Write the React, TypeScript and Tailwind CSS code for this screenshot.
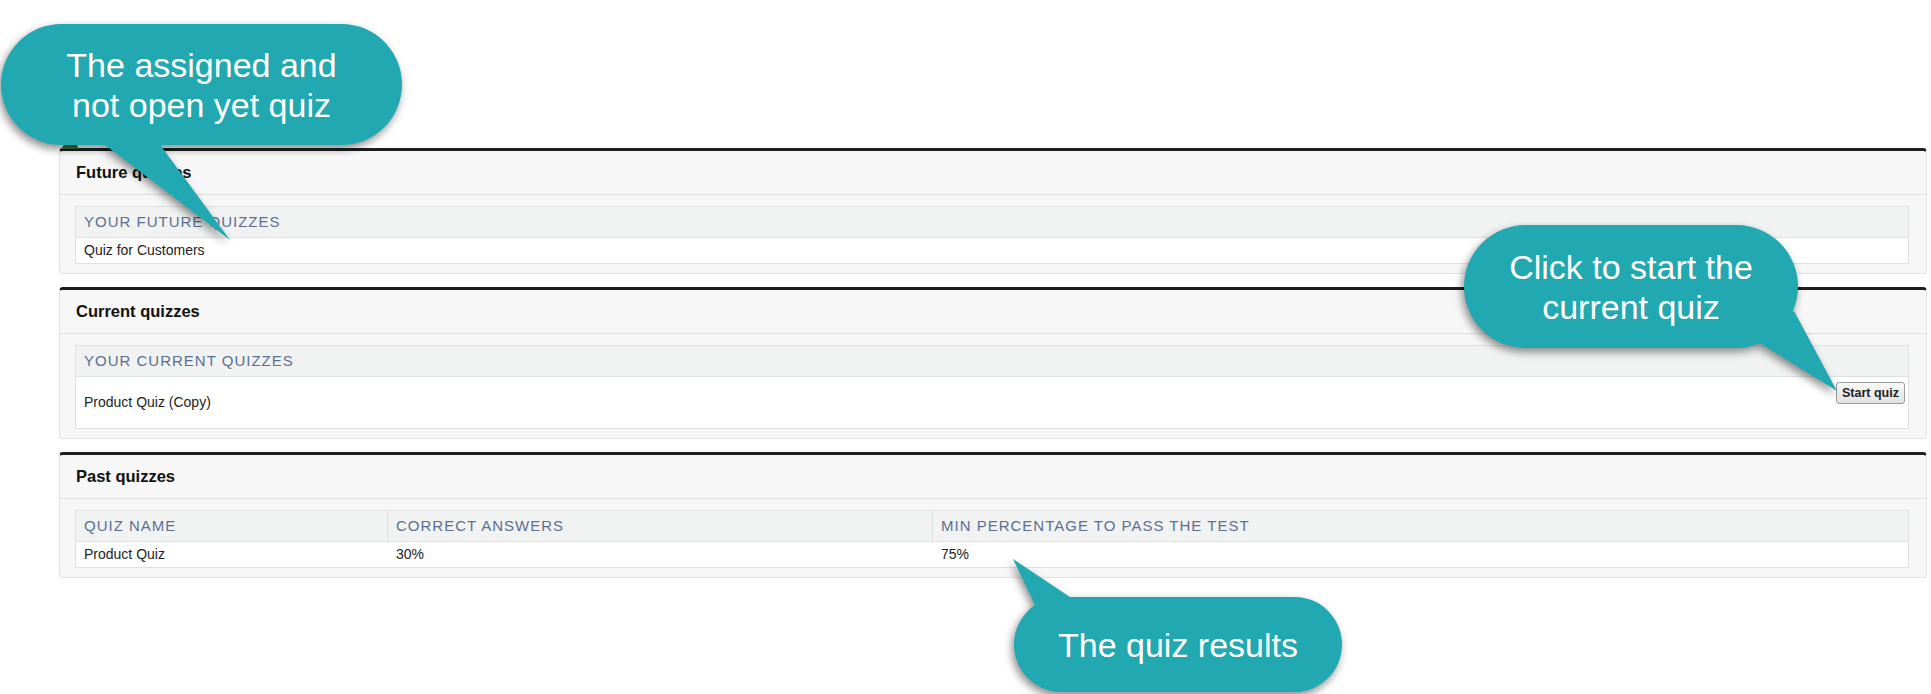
import React from "react";

const font = "font-['Liberation_Sans',Arial,sans-serif]";

function Panel({ title, children }: { title: string; children: React.ReactNode }) {
  return (
    <div className="rounded-[4px] border border-[#e2e2e2] border-t-[3px] border-t-[#1e1e1e] bg-[#f7f7f7]">
      <div className="h-[44px] flex items-center px-[16px] border-b border-[#dedede] text-[16.5px] font-bold text-[#111]">
        {title}
      </div>
      <div className="pt-[11px] pb-[9px] pl-[15px] pr-[17px]">{children}</div>
    </div>
  );
}

const th =
  "h-[31px] flex items-center px-[8px] text-[15px] tracking-[1px] uppercase text-[#5b6f92]";
const thCell =
  "h-[30px] flex items-center px-[8px] text-[15px] tracking-[1px] uppercase text-[#5b6f92]";

function Bubble({
  left,
  top,
  width,
  height,
  tail,
  svgBox,
  children,
}: {
  left: number;
  top: number;
  width: number;
  height: number;
  tail: string;
  svgBox: { x: number; y: number; w: number; h: number };
  children: React.ReactNode;
}) {
  return (
    <div
      className="absolute drop-shadow-[-2px_4px_4px_rgba(0,0,0,0.45)]"
      style={{ left, top, width, height }}
    >
      <svg
        className="absolute"
        style={{ left: svgBox.x, top: svgBox.y, width: svgBox.w, height: svgBox.h }}
        viewBox={`${svgBox.x} ${svgBox.y} ${svgBox.w} ${svgBox.h}`}
      >
        <polygon points={tail} fill="#22a8b0" />
      </svg>
      <div className="absolute inset-0 rounded-full bg-[#22a8b0] flex flex-col items-center justify-center text-white text-[34px] leading-[40px] text-center">
        {children}
      </div>
    </div>
  );
}

export default function App() {
  return (
    <div className={`relative min-h-[694px] bg-white overflow-hidden ${font}`}>
      <svg className="absolute left-[60px] top-[139px] w-[20px] h-[11px]" viewBox="0 0 20 11">
        <path d="M1 10 L6 3 L10 6 L14 1 L19 10 Z" fill="#3f6b3c" />
      </svg>
      <div className="pt-[148px] pl-[59px] pr-[4px] flex flex-col gap-[13px]">
        <Panel title="Future quizzes">
          <div className="border border-[#dde1e1] bg-white">
            <div className={`${th} bg-[#f1f3f3] border-b border-[#dde1e1]`}>Your future quizzes</div>
            <div className="h-[25px] flex items-center px-[8px] text-[14px] text-[#222]">Quiz for Customers</div>
          </div>
        </Panel>
        <Panel title="Current quizzes">
          <div className="border border-[#dde1e1] bg-white">
            <div className={`${th} bg-[#f1f3f3] border-b border-[#dde1e1]`}>Your current quizzes</div>
            <div className="h-[51px] flex items-start justify-between pl-[8px] pr-[3px] text-[14px] text-[#222]">
              <span className="self-center">Product Quiz (Copy)</span>
              <button className="mt-[5px] h-[22px] w-[69px] rounded-[3px] border border-[#9a9a9a] bg-gradient-to-b from-[#fafafa] to-[#e2e2e2] text-[12.5px] font-bold text-[#222] leading-none">
                Start quiz
              </button>
            </div>
          </div>
        </Panel>
        <Panel title="Past quizzes">
          <div className="border border-[#dde1e1] bg-white">
            <div className="grid grid-cols-[311px_545px_1fr] bg-[#f1f3f3] border-b border-[#dde1e1]">
              <div className={thCell}>Quiz name</div>
              <div className={`${thCell} border-l border-[#dde1e1]`}>Correct answers</div>
              <div className={`${thCell} border-l border-[#dde1e1]`}>Min percentage to pass the test</div>
            </div>
            <div className="grid grid-cols-[311px_545px_1fr] h-[25px] text-[14px] text-[#222]">
              <div className="flex items-center px-[8px]">Product Quiz</div>
              <div className="flex items-center px-[8px] pl-[9px]">30%</div>
              <div className="flex items-center px-[8px] pl-[9px]">75%</div>
            </div>
          </div>
        </Panel>
      </div>

      <Bubble
        left={1}
        top={24}
        width={401}
        height={121}
        tail="91,111 152,111 229,216"
        svgBox={{ x: 80, y: 100, w: 160, h: 120 }}
      >
        <span>The assigned and</span>
        <span>not open yet quiz</span>
      </Bubble>

      <Bubble
        left={1464}
        top={225}
        width={334}
        height={123}
        tail="286,112 330,86 373,166"
        svgBox={{ x: 270, y: 80, w: 110, h: 90 }}
      >
        <span>Click to start the</span>
        <span>current quiz</span>
      </Bubble>

      <Bubble
        left={1014}
        top={597}
        width={328}
        height={95}
        tail="22,10 62,4 -1,-38"
        svgBox={{ x: -5, y: -42, w: 75, h: 56 }}
      >
        <span>The quiz results</span>
      </Bubble>
    </div>
  );
}
